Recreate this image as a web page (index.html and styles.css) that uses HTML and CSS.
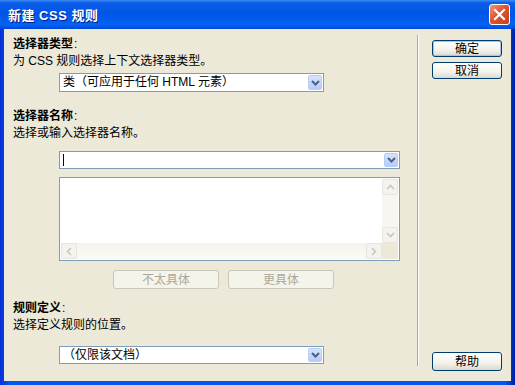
FILE: index.html
```html
<!DOCTYPE html>
<html lang="zh-CN">
<head>
  <meta charset="UTF-8" />
  <title>新建 CSS 规则</title>
  <link rel="stylesheet" href="styles.css">
</head>
<body>
  <div class="window">
    <div class="titlebar">
      <span class="title">新建 CSS 规则</span>
      <div class="close-btn">
        <svg width="13" height="13" viewBox="0 0 13 13"><path d="M2 2 L11 11 M11 2 L2 11" stroke="#fff" stroke-width="2.2" stroke-linecap="square"/></svg>
      </div>
    </div>

    <div class="client">
      <div class="main">
        <div class="label">选择器类型<span class="colon">:</span></div>
        <div class="desc">为 CSS 规则选择上下文选择器类型。</div>
        <div class="combo combo-short">
          <div class="combo-text">类（可应用于任何 HTML 元素）</div>
          <div class="combo-arrow">
            <svg width="9" height="6" viewBox="0 0 9 6"><path d="M1 1 L4.5 4.5 L8 1" fill="none" stroke="#4d6185" stroke-width="2"/></svg>
          </div>
        </div>

        <div class="label label-gap">选择器名称<span class="colon">:</span></div>
        <div class="desc">选择或输入选择器名称。</div>
        <div class="combo combo-long">
          <div class="combo-text"><span class="caret"></span></div>
          <div class="combo-arrow">
            <svg width="9" height="6" viewBox="0 0 9 6"><path d="M1 1 L4.5 4.5 L8 1" fill="none" stroke="#4d6185" stroke-width="2"/></svg>
          </div>
        </div>

        <div class="listbox">
          <div class="list-body">
            <div class="list-area"></div>
            <div class="vscroll">
              <div class="sb-btn">
                <svg width="9" height="6" viewBox="0 0 9 6"><path d="M1 5 L4.5 1.5 L8 5" fill="none" stroke="#c9c7ba" stroke-width="1.6"/></svg>
              </div>
              <div class="sb-track"></div>
              <div class="sb-btn">
                <svg width="9" height="6" viewBox="0 0 9 6"><path d="M1 1 L4.5 4.5 L8 1" fill="none" stroke="#c9c7ba" stroke-width="1.6"/></svg>
              </div>
            </div>
          </div>
          <div class="hscroll-row">
            <div class="hscroll">
              <div class="sb-btn">
                <svg width="6" height="9" viewBox="0 0 6 9"><path d="M5 1 L1.5 4.5 L5 8" fill="none" stroke="#c9c7ba" stroke-width="1.6"/></svg>
              </div>
              <div class="sb-track"></div>
              <div class="sb-btn">
                <svg width="6" height="9" viewBox="0 0 6 9"><path d="M1 1 L4.5 4.5 L1 8" fill="none" stroke="#c9c7ba" stroke-width="1.6"/></svg>
              </div>
            </div>
            <div class="sb-corner"></div>
          </div>
        </div>

        <div class="spec-row">
          <button class="btn btn-disabled btn-wide">不太具体</button>
          <button class="btn btn-disabled btn-wide">更具体</button>
        </div>

        <div class="label label-gap-small">规则定义<span class="colon">:</span></div>
        <div class="desc">选择定义规则的位置。</div>
        <div class="combo combo-short combo-last">
          <div class="combo-text">（仅限该文档）</div>
          <div class="combo-arrow">
            <svg width="9" height="6" viewBox="0 0 9 6"><path d="M1 1 L4.5 4.5 L8 1" fill="none" stroke="#4d6185" stroke-width="2"/></svg>
          </div>
        </div>
      </div>

      <div class="separator"></div>

      <div class="side">
        <div class="side-top">
          <button class="btn btn-default">确定</button>
          <button class="btn">取消</button>
        </div>
        <button class="btn btn-help">帮助</button>
      </div>
    </div>
  </div>
</body>
</html>
```

FILE: styles.css
```css
* {
  box-sizing: border-box;
}

body {
  margin: 0;
  font-family: "Liberation Sans", "Noto Sans CJK SC", sans-serif;
  font-size: 12px;
  color: #000;
  background: #fff;
}

.window {
  width: 515px;
  height: 385px;
  display: flex;
  flex-direction: column;
  background: linear-gradient(to right, #0831d9, #0058ee 2%, #0058ee 98%, #001ea0);
}

.titlebar {
  height: 29px;
  display: flex;
  align-items: center;
  justify-content: space-between;
  padding: 0 5px 0 8px;
  background: linear-gradient(#3d8bf5 0, #0a5de8 10%, #0055e6 45%, #0262f3 85%, #0048d8 100%);
}

.title {
  color: #fff;
  font-weight: bold;
  font-size: 13px;
  letter-spacing: 0.5px;
  text-shadow: 1px 1px #0a1883;
}

.close-btn {
  width: 21px;
  height: 21px;
  border: 1px solid #fff;
  border-radius: 3px;
  background: linear-gradient(135deg, #f09a7a, #e0532d 45%, #c93f1b);
  display: flex;
  align-items: center;
  justify-content: center;
}

.client {
  flex: 1;
  margin: 0 4px 4px;
  background: #ece9d8;
  display: flex;
}

.main {
  width: 413px;
  padding: 7px 0 0 9px;
  display: flex;
  flex-direction: column;
}

.label {
  font-weight: bold;
  line-height: 17px;
}

.colon {
  font-weight: normal;
  margin-left: 1px;
}

.label-gap {
  margin-top: 16px;
}

.label-gap-small {
  margin-top: 11px;
}

.desc {
  line-height: 17px;
}

.combo {
  margin-left: 46px;
  height: 19px;
  border: 1px solid #7f9db9;
  background: #fff;
  display: flex;
  align-items: stretch;
  padding: 1px;
}

.combo-short {
  width: 265px;
  margin-top: 3px;
}

.combo-long {
  width: 341px;
  margin-top: 9px;
  height: 18px;
}

.combo-last {
  margin-top: 12px;
  height: 18px;
}

.combo-text {
  flex: 1;
  padding-left: 2px;
  line-height: 15px;
  display: flex;
  align-items: center;
}

.caret {
  width: 1px;
  height: 12px;
  background: #000;
}

.combo-arrow {
  width: 14px;
  border-radius: 2px;
  background: linear-gradient(#d6e3fe, #b5cbf9);
  border: 1px solid #b8ccf8;
  display: flex;
  align-items: center;
  justify-content: center;
}

.listbox {
  margin: 8px 0 0 46px;
  width: 341px;
  height: 84px;
  border: 1px solid #7f9db9;
  background: #fff;
  padding: 1px;
  display: flex;
  flex-direction: column;
}

.list-body {
  flex: 1;
  display: flex;
}

.list-area {
  flex: 1;
}

.vscroll {
  width: 16px;
  display: flex;
  flex-direction: column;
  background: #f7f6f1;
}

.hscroll-row {
  height: 16px;
  display: flex;
}

.hscroll {
  flex: 1;
  display: flex;
  background: linear-gradient(#f4f3ee, #fbfaf6);
}

.sb-btn {
  width: 16px;
  height: 16px;
  border: 1px solid #e8e6dc;
  border-radius: 2px;
  background: #f4f3ee;
  display: flex;
  align-items: center;
  justify-content: center;
}

.sb-track {
  flex: 1;
}

.sb-corner {
  width: 16px;
  background: #ece9d8;
}

.spec-row {
  display: flex;
  gap: 9px;
  margin: 9px 0 0 100px;
}

.btn {
  font-family: "Liberation Sans", "Noto Sans CJK SC", sans-serif;
  font-size: 12px;
  width: 70px;
  height: 17px;
  padding: 0;
  line-height: 14px;
  color: #000;
  border: 1px solid #003c74;
  border-radius: 3px;
  background: linear-gradient(#ffffff, #f3f2ec 60%, #dcd9cb);
}

.btn-default {
  box-shadow: inset 0 0 0 1px #a9c2ee;
}

.btn-wide {
  width: 106px;
  height: 19px;
}

.btn-disabled {
  color: #aca899;
  border-color: #c9c7ba;
  background: #f5f4ea;
}

.separator {
  width: 2px;
  margin: 6px 0 15px;
  border-left: 1px solid #aca899;
  border-right: 1px solid #fff;
}

.side {
  flex: 1;
  padding: 11px 0 10px 13px;
  display: flex;
  flex-direction: column;
  justify-content: space-between;
}

.side-top {
  display: flex;
  flex-direction: column;
  gap: 5px;
}

.btn-help {
  height: 19px;
}
```
